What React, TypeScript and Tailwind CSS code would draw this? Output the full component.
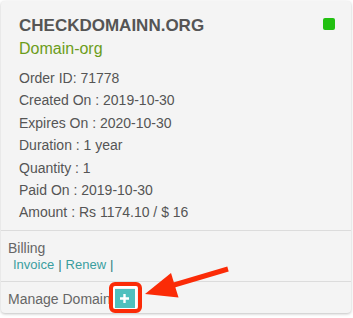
export default function App() {
  const details = [
    "Order ID: 71778",
    "Created On : 2019-10-30",
    "Expires On : 2020-10-30",
    "Duration : 1 year",
    "Quantity : 1",
    "Paid On : 2019-10-30",
    "Amount : Rs 1174.10 / $ 16",
  ]

  return (
    <div
      className="relative w-[353px] h-[318px] bg-white p-[1px]"
      style={{ fontFamily: '"Liberation Sans", Arial, sans-serif' }}
    >
      {/* domain card */}
      <div className="w-[350px] h-[312px] rounded-[4px] bg-[#f4f4f4] shadow-[0_1px_3px_rgba(0,0,0,0.25)] flex flex-col">
        <div className="pl-[18px] pr-4 pt-[15px] pb-[6px]">
          <div className="flex justify-between">
            <h2 className="text-[17px] leading-[20px] font-bold text-[#555]">CHECKDOMAINN.ORG</h2>
            <span className="mt-[2px] w-3 h-3 rounded-[2px] bg-[#22c011]" />
          </div>
          <div className="mt-[2px] text-[16px] leading-[22px] text-[#6c9d1b]">Domain-org</div>
          <div className="mt-[7px] text-[14px] leading-[22.4px] text-[#555]">
            {details.map((d) => (
              <div key={d}>{d}</div>
            ))}
          </div>
        </div>

        <div className="border-t border-[#dcdcdc] px-[7px] pt-[8px] pb-[8px]">
          <div className="text-[14px] leading-[18px] text-[#666]">Billing</div>
          <div className="pl-[5px] text-[13px] leading-[16px] text-[#3a9e9f]">
            <a href="#">Invoice</a>
            <span className="mx-[4px] text-[#2b7f80]">|</span>
            <a href="#">Renew</a>
            <span className="ml-[4px] text-[#2b7f80]">|</span>
          </div>
        </div>

        <div className="border-t border-[#dcdcdc] px-[7px] pt-[7px]">
          <div className="flex items-center h-5">
            <span className="text-[14px] leading-[20px] text-[#666]">Manage Domain</span>
            <button className="ml-[4px] w-5 h-5 bg-[#4fc0be] flex items-center justify-center">
              <svg width="11" height="11" viewBox="0 0 11 11">
                <path d="M5.5 1v9M1 5.5h9" stroke="#fff" strokeWidth="2.4" />
              </svg>
            </button>
          </div>
        </div>
      </div>

      {/* annotation */}
      <svg className="absolute inset-0 pointer-events-none" width="353" height="318" viewBox="0 0 353 318">
        <rect x="114" y="287" width="22" height="22" fill="none" stroke="#fff" strokeWidth="2" />
        <rect x="111" y="284" width="29" height="27" rx="4" fill="none" stroke="#fb2b07" strokeWidth="4" />
        <line x1="174" y1="285" x2="228" y2="269" stroke="#fb2b07" strokeWidth="5" />
        <polygon points="145,294 171,273 178.5,297.5" fill="#fb2b07" />
      </svg>
    </div>
  )
}
